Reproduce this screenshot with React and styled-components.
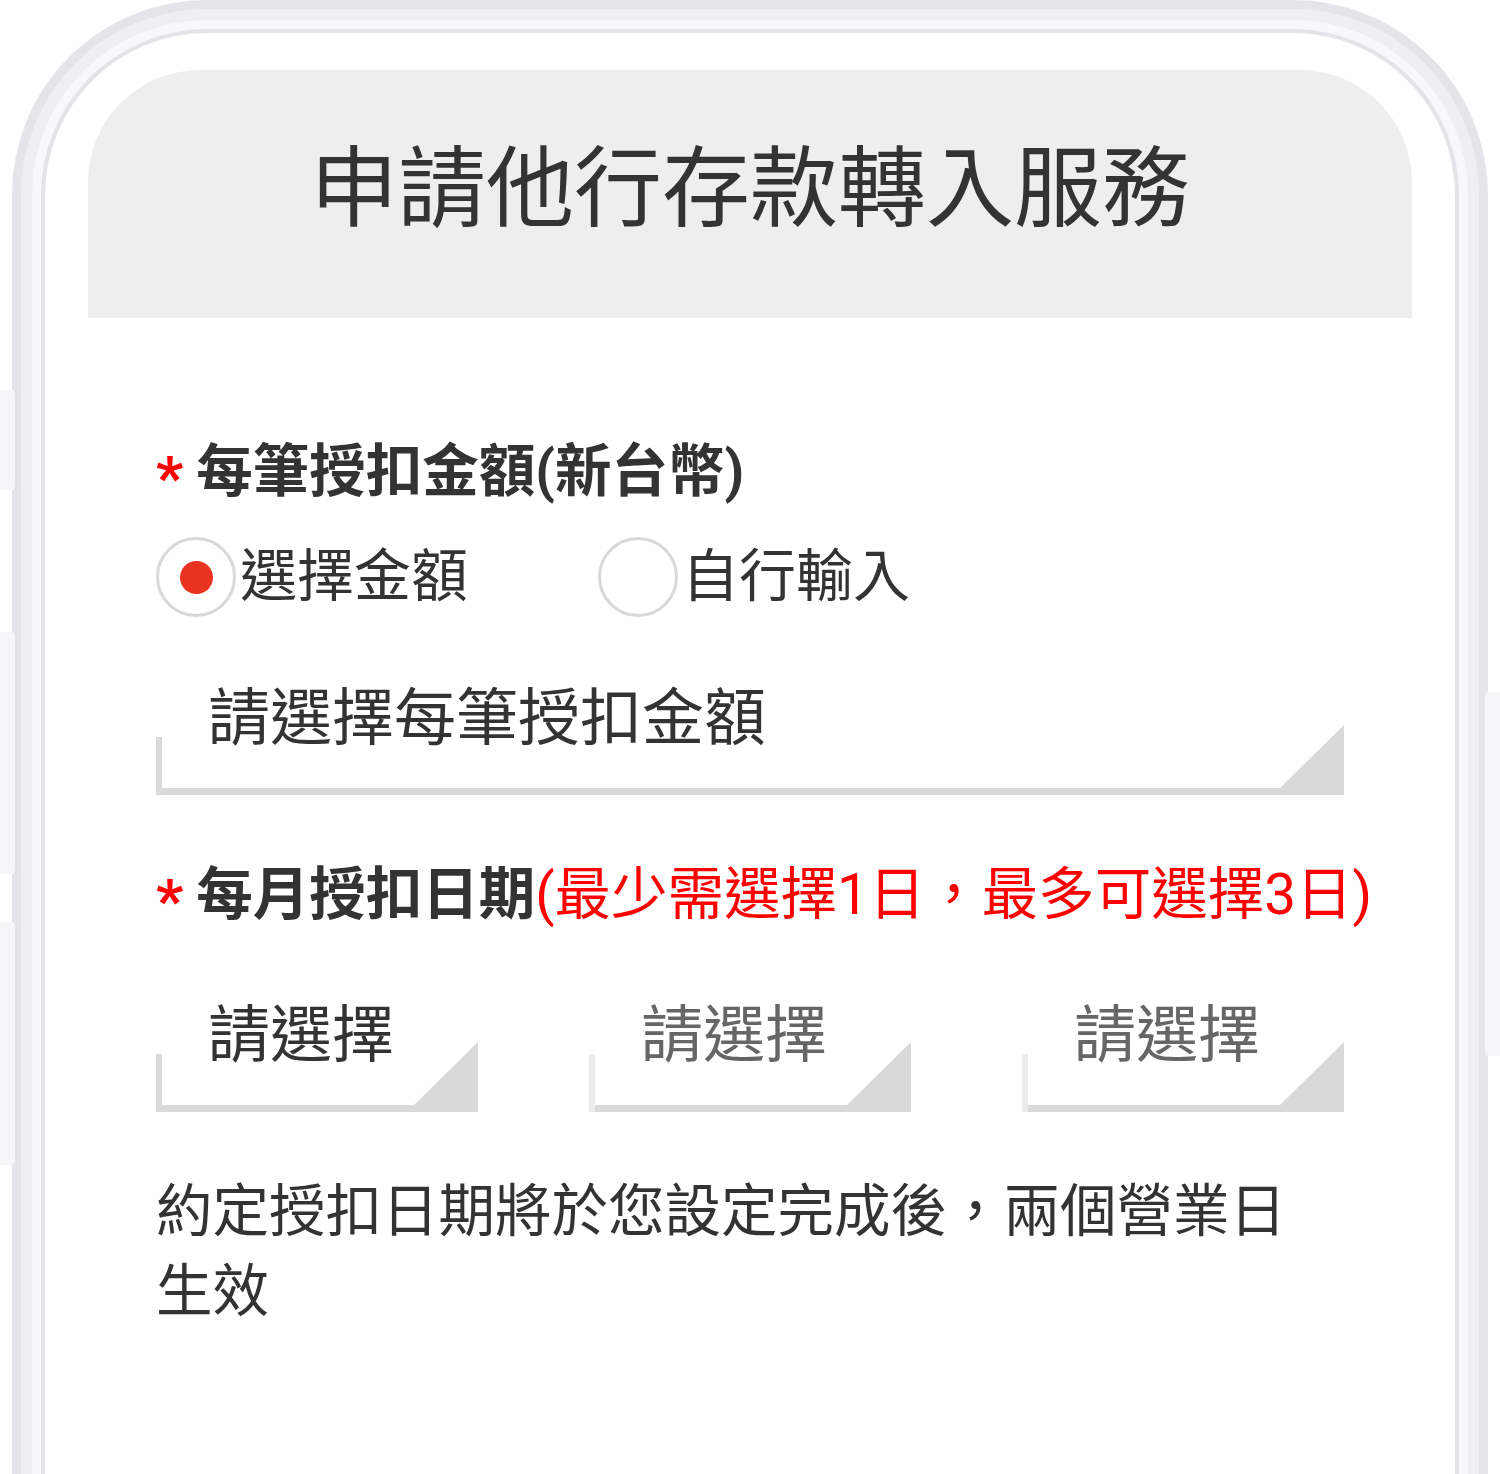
import React from 'react';
import styled, { createGlobalStyle } from 'styled-components';

const GlobalStyle = createGlobalStyle`
  html, body {
    margin: 0;
    padding: 0;
    background: #fff;
  }
  body {
    font-family: Roboto, "Noto Sans CJK TC", "Noto Sans", sans-serif;
    color: #333;
  }
`;

const Stage = styled.div`
  position: relative;
  width: 1500px;
  height: 1474px;
  overflow: hidden;
  background: #fff;
`;

const SideKey = styled.div`
  position: absolute;
  top: ${(p) => p.$top}px;
  height: ${(p) => p.$height}px;
  width: 17px;
  ${(p) => (p.$right ? 'right: 0;' : 'left: 0;')}
  background: #f6f6f8;
  border-radius: ${(p) => (p.$right ? '4px 0 0 4px' : '0 4px 4px 0')};
  box-shadow: ${(p) => (p.$right ? 'inset 2px 0 0 #e6e6e9' : 'inset -2px 0 0 #e2e2e5')};
`;

const Phone = styled.div`
  position: relative;
  margin: 0 12px;
  height: 1620px;
  box-sizing: border-box;
  border: 9px solid #e5e5e9;
  border-radius: 195px 195px 60px 60px;
  box-shadow: inset 0 0 0 11px #efeff1, inset 0 0 0 20px #f8f8fa,
    inset 0 0 0 24px #e4e4e8;
  padding: 61px 67px 0;
  background: #fff;
`;

const Header = styled.div`
  height: 248px;
  background: #eeeeee;
  border-radius: 112px 112px 0 0;
  display: flex;
  align-items: center;
  justify-content: center;
  padding-bottom: 10px;
  box-sizing: border-box;
`;

const Title = styled.h1`
  margin: 0;
  font-size: 88px;
  font-weight: 400;
  line-height: 1;
  color: #333;
`;

const Form = styled.div`
  padding: 0 68px;
  display: flex;
  flex-direction: column;
`;

const Label = styled.div`
  margin-top: ${(p) => p.$gap}px;
  font-size: 56.5px;
  line-height: 72px;
  font-weight: 700;
  color: #333;
  white-space: nowrap;
`;

const Star = styled.span`
  color: #ff0000;
  font-weight: 700;
  font-size: 60px;
  line-height: 0;
  vertical-align: -7px;
  margin-right: 13px;
`;

const Hint = styled.span`
  color: #ff0000;
  font-weight: 400;
`;

const RadioRow = styled.div`
  margin-top: 29px;
  display: flex;
  align-items: center;
  gap: 130px;
`;

const RadioOption = styled.label`
  display: flex;
  align-items: center;
  gap: 4px;
  font-size: 57px;
  line-height: 80px;
  color: #333;
`;

const RadioCircle = styled.span`
  width: 80px;
  height: 80px;
  box-sizing: border-box;
  border: 3px solid #d8d8d8;
  border-radius: 50%;
  display: flex;
  align-items: center;
  justify-content: center;
  &::after {
    content: '';
    display: ${(p) => (p.$checked ? 'block' : 'none')};
    width: 33px;
    height: 33px;
    border-radius: 50%;
    background: #e9321f;
  }
`;

const Select = styled.div`
  position: relative;
  margin-top: ${(p) => p.$gap || 0}px;
  height: 119px;
  box-sizing: border-box;
  border-bottom: 7px solid #d9d9d9;
  padding-left: 52px;
  padding-top: 3px;
  font-size: 62px;
  line-height: 80px;
  color: ${(p) => (p.$muted ? '#666' : '#333')};
  white-space: nowrap;
  &::before {
    content: '';
    position: absolute;
    left: 0;
    bottom: -7px;
    width: 6px;
    height: 58px;
    background: ${(p) => (p.$muted ? '#ececec' : '#d9d9d9')};
  }
  &::after {
    content: '';
    position: absolute;
    right: 0;
    bottom: 0;
    width: 64px;
    height: 63px;
    background: #d9d9d9;
    clip-path: polygon(100% 0, 100% 100%, 0 100%);
  }
`;

const DateRow = styled.div`
  margin-top: 62px;
  display: grid;
  grid-template-columns: repeat(3, 1fr);
  column-gap: 111px;
`;

const Note = styled.p`
  margin: 60px 0 0;
  width: 1150px;
  font-size: 56.5px;
  line-height: 80px;
  color: #333;
`;

export default function App() {
  return (
    <Stage>
      <GlobalStyle />
      <Phone>
        <Header>
          <Title>申請他行存款轉入服務</Title>
        </Header>
        <Form>
          <Label $gap={118}>
            <Star>*</Star>每筆授扣金額(新台幣)
          </Label>
          <RadioRow>
            <RadioOption>
              <RadioCircle $checked />
              選擇金額
            </RadioOption>
            <RadioOption>
              <RadioCircle />
              自行輸入
            </RadioOption>
          </RadioRow>
          <Select $gap={59}>請選擇每筆授扣金額</Select>
          <Label $gap={64}>
            <Star>*</Star>每月授扣日期<Hint>(最少需選擇1日，最多可選擇3日)</Hint>
          </Label>
          <DateRow>
            <Select>請選擇</Select>
            <Select $muted>請選擇</Select>
            <Select $muted>請選擇</Select>
          </DateRow>
          <Note>約定授扣日期將於您設定完成後，兩個營業日生效</Note>
        </Form>
      </Phone>
      <SideKey $top={390} $height={100} />
      <SideKey $top={632} $height={242} />
      <SideKey $top={922} $height={243} />
      <SideKey $right $top={692} $height={364} />
    </Stage>
  );
}
